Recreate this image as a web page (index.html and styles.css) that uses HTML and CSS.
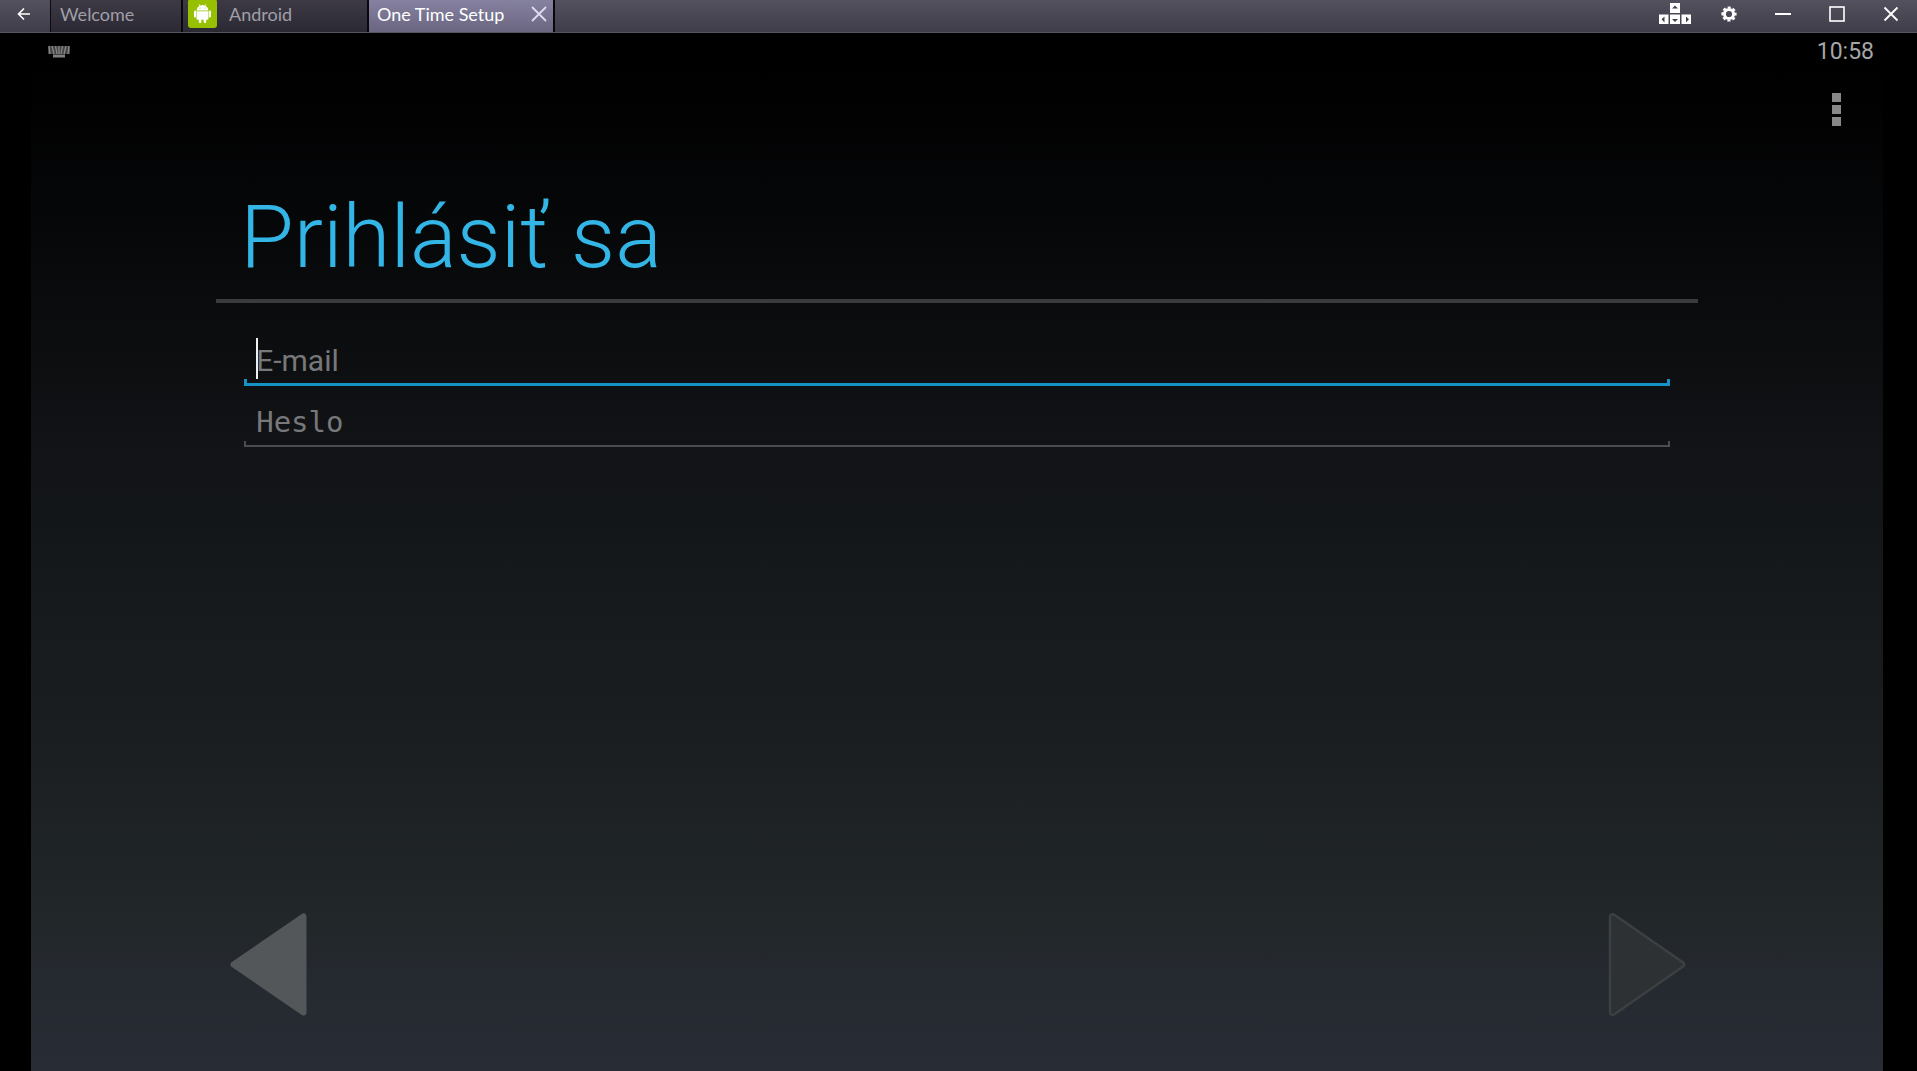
FILE: index.html
```html
<!DOCTYPE html>
<html lang="sk">
<head>
<meta charset="utf-8">
<title>One Time Setup</title>
<link rel="stylesheet" href="styles.css">
</head>
<body>
<header class="titlebar">
  <button class="back" aria-label="Back">
    <svg width="14" height="14" viewBox="0 0 14 14"><path d="M7 1.5L1.5 7L7 12.500M1.500 7H13" fill="none" stroke="#fff" stroke-width="1.600"/></svg>
  </button>
  <nav class="tabs">
    <button class="tab tab-welcome">Welcome</button>
    <button class="tab tab-android">
      <svg class="droid" width="29" height="29" viewBox="0 0 29 29">
        <rect width="29" height="29" rx="3" fill="#97c003"/>
        <g fill="#fff">
          <path d="M8.500 11.500a5.900 5.900 0 0 1 3-4.700l-.9-1.500.5-.3 1 1.600a6.500 6.500 0 0 1 4.800 0l1-1.600.5.300-.9 1.500a5.900 5.900 0 0 1 3 4.700z"/>
          <path d="M8.500 12.200h12v7.300a1.300 1.300 0 0 1-1.300 1.300h-1v2a1.200 1.200 0 0 1-2.500 0v-2h-2.400v2a1.200 1.200 0 0 1-2.500 0v-2h-1a1.300 1.300 0 0 1-1.300-1.300z"/>
          <rect x="6" y="11.500" width="2" height="7" rx="1"/><rect x="21" y="11.500" width="2" height="7" rx="1"/>
        </g>
        <circle cx="12" cy="9" r=".6" fill="#97c003"/><circle cx="17" cy="9" r=".6" fill="#97c003"/>
      </svg>
      Android
    </button>
    <div class="tab tab-active">
      <span>One Time Setup</span>
      <button class="close" aria-label="Close tab">
        <svg width="16" height="16" viewBox="0 0 16 16"><path d="M1 1L15 15M15 1L1 15" stroke="#dedaf0" stroke-width="1.800"/></svg>
      </button>
    </div>
  </nav>
  <div class="controls">
    <button aria-label="Keyboard controls">
      <svg width="32" height="22" viewBox="0 0 32 22"><path fill="#fff" d="M11 0h10v10H11zM0 11.500h9.500V21H0zM11 11.500h10V21H11zM22.500 11.500H32V21h-9.500z"/><path fill="#46434f" d="M13 5.500L16 2.500L19 5.500zM5.500 13.500v6L2.500 16.300zM13 16L16 19L19 16zM27 13.500v6L30 16.300z"/></svg>
    </button>
    <button aria-label="Settings">
      <svg width="16" height="16" viewBox="-8 -8 16 16"><circle r="4.600" fill="none" stroke="#fff" stroke-width="3"/><circle r="6.600" fill="none" stroke="#fff" stroke-width="2" stroke-dasharray="3.100 2.084" stroke-dashoffset="1.550"/></svg>
    </button>
    <button aria-label="Minimize">
      <svg width="16" height="16" viewBox="0 0 16 16"><path d="M0 8H16" stroke="#fff" stroke-width="2"/></svg>
    </button>
    <button aria-label="Maximize">
      <svg width="16" height="16" viewBox="0 0 16 16"><rect x="1" y="1" width="14" height="14" fill="none" stroke="#fff" stroke-width="1.600"/></svg>
    </button>
    <button aria-label="Close">
      <svg width="16" height="16" viewBox="0 0 16 16"><path d="M1.500 1.500L14.500 14.500M14.500 1.500L1.500 14.500" stroke="#fff" stroke-width="1.800"/></svg>
    </button>
  </div>
</header>
<main class="screen">
  <div class="status">
    <svg width="22" height="12" viewBox="0 0 22 12"><rect width="22" height="8" fill="#444"/><path d="M1 0L2 8M4 0L6 8M7.500 0L9 8M11 0V8M14.500 0L13 8M18 0L16 8M21 0L20 8" stroke="#888" stroke-width="1.300"/><path d="M5 10H17" stroke="#808080" stroke-width="3"/></svg>
    <time>10:58</time>
  </div>
  <button class="menu" aria-label="Menu">
    <svg width="9" height="33" viewBox="0 0 9 33"><path fill="#888" d="M0 0h9v9H0zM0 12h9v9H0zM0 24h9v9H0z"/></svg>
  </button>
  <form class="signin">
    <h1>Prihlásiť sa</h1>
    <div class="fields">
      <input class="field email" type="email" placeholder="E-mail" aria-label="E-mail">
      <input class="field password" type="password" placeholder="Heslo" aria-label="Heslo">
    </div>
    <div class="steps">
      <button type="button" aria-label="Späť">
        <svg width="78" height="105" viewBox="0 0 78 105"><path d="M73.500 4.500V100.500L3.500 52.500z" fill="#535759" stroke="#535759" stroke-width="6" stroke-linejoin="round"/></svg>
      </button>
      <button type="button" aria-label="Ďalej" disabled>
        <svg width="78" height="105" viewBox="0 0 78 105"><path d="M2 4.500Q2 1.500 6 2.500L75 50.500Q77.500 52.500 75 54.500L6 102.500Q2 103.500 2 100.500z" fill="#2d3134" stroke="#3d4043" stroke-width="2.500" stroke-linejoin="round"/></svg>
      </button>
    </div>
  </form>
</main>
</body>
</html>
```
FILE: styles.css
```css
* { box-sizing: border-box; }
body {
  margin: 0;
  min-height: 100vh;
  display: flex;
  flex-direction: column;
  background: #000;
  font-family: Roboto, sans-serif;
}
button {
  padding: 0;
  border: 0;
  background: none;
  font: inherit;
  color: inherit;
}
svg { display: block; flex: none; }

.titlebar {
  display: flex;
  height: 33px;
  border-bottom: 1px solid #56535e;
  background: linear-gradient(#54515e, #403d4b);
  font: 18px/26px Lato, sans-serif;
  color: #a09fa8;
}
.back {
  width: 51px;
  padding: 0 0 4px 17px;
  border-right: 1px solid #0b0a0e;
}
.tabs { display: flex; background: #08080a; gap: 2px; padding-right: 2px; }
.tab {
  display: flex;
  align-items: center;
  padding-bottom: 5px;
  background: linear-gradient(#3d3a45, #2b2933);
}
.tab-welcome { width: 130px; padding-left: 9px; }
.tab-android { width: 184px; padding-left: 5px; gap: 12px; }
.tab-active {
  width: 184px;
  justify-content: space-between;
  padding-left: 8px;
  padding-right: 6px;
  background: linear-gradient(#8581a0, #6a6681);
  color: #fff;
}
.controls {
  display: flex;
  align-items: center;
  gap: 38px;
  margin-left: auto;
  padding: 0 18px 4px 0;
}
.controls button:first-child { margin-right: -8px; }

.screen {
  flex: 1;
  display: flex;
  flex-direction: column;
  margin: 0 34px 0 31px;
  background: linear-gradient(#000 0, #010102 6%, #060708 18%, #0c0d0f 29%, #121316 40%, #14181a 50%, #1b1f22 70%, #22272a 86%, #252930 91%, #282c34 100%);
}
.status {
  display: flex;
  align-items: center;
  justify-content: space-between;
  padding: 1px 9px 0 17px;
  font-size: 23px;
  line-height: 36px;
  color: #a6a6a6;
}
.menu { align-self: flex-end; margin: 23px 42px 0 0; }

.signin {
  flex: 1;
  display: flex;
  flex-direction: column;
  margin: 0 10%;
}
h1 {
  margin: 0;
  padding: 60px 0 11px 24px;
  border-bottom: 4px solid #3b3c3e;
  font-size: 87px;
  font-weight: 300;
  line-height: 102px;
  color: #33b5e5;
}
.fields {
  display: flex;
  flex-direction: column;
  padding: 30px 28px 0;
}
.field {
  width: 100%;
  padding: 4px 12px 0;
  border: 0;
  border-radius: 0;
  outline: 0;
  background: none;
  color: #fff;
  caret-color: #fff;
}
.field::placeholder { color: #77787a; opacity: 1; }
.email {
  height: 53px;
  border-bottom: 3px solid #1593c4;
  background:
    linear-gradient(#1593c4, #1593c4) left bottom / 3px 4px no-repeat,
    linear-gradient(#1593c4, #1593c4) right bottom / 3px 4px no-repeat,
    linear-gradient(#f0f0f0, #f0f0f0) 12px 5px / 2px 41px no-repeat;
  font: 30px Roboto, sans-serif;
}
.password {
  height: 61px;
  padding-top: 12px;
  border-bottom: 2px solid #4b4c4f;
  background:
    linear-gradient(#4b4c4f, #4b4c4f) left bottom / 2px 4px no-repeat,
    linear-gradient(#4b4c4f, #4b4c4f) right bottom / 2px 4px no-repeat;
  font: 29px "DejaVu Sans Mono", monospace;
}
.steps {
  display: flex;
  justify-content: space-between;
  margin-top: auto;
  padding: 40px 12px 54px 14px;
}
```
